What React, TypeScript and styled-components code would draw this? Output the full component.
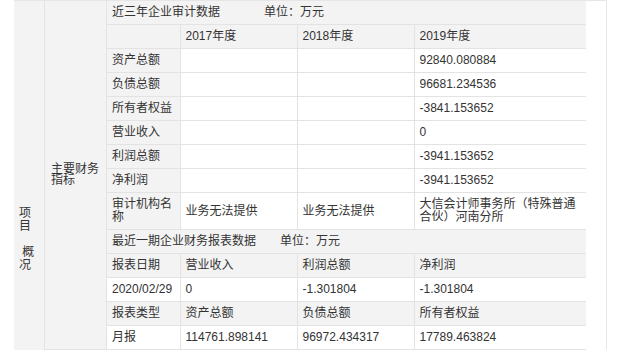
import React from "react";
import styled, { createGlobalStyle } from "styled-components";

const GlobalStyle = createGlobalStyle`
  body {
    margin: 0;
    background: #fff;
    font-family: "Liberation Sans", Arial, "Noto Sans CJK SC", sans-serif;
    font-size: 12px;
    color: #333;
  }
`;

const Page = styled.div`
  padding-left: 14px;
`;

const Outer = styled.div`
  display: flex;
  align-items: flex-start;
  width: 593px;
  box-sizing: border-box;
  border-top: 1px solid #e6e6e6;
  border-right: 1px solid #e6e6e6;
`;

const SideLabel = styled.div`
  box-sizing: border-box;
  width: 31px;
  min-height: 476px;
  padding: 0 5px;
  display: flex;
  align-items: center;
  background: #f3f3f3;
  border-right: 1px solid #e3e3e3;
  line-height: 13px;
`;

const SideText = styled.div`
  width: 20px;
`;

const Group = styled.div`
  display: flex;
  border-bottom: 1px solid #e3e3e3;
`;

const GroupLabel = styled.div`
  box-sizing: border-box;
  width: 62px;
  padding: 0 6px;
  display: flex;
  align-items: center;
  background: #f3f3f3;
  border-right: 1px solid #e3e3e3;
  line-height: 11px;
`;

const Sheet = styled.table`
  width: 479px;
  table-layout: fixed;
  border-collapse: collapse;
`;

const Row = styled.tr<{ $head?: boolean }>`
  background: ${(p) => (p.$head ? "#f3f3f3" : "#fff")};
  &:last-child td {
    border-bottom: none;
  }
`;

const Cell = styled.td<{ $label?: boolean }>`
  padding: 5px 5px;
  line-height: 13px;
  vertical-align: middle;
  border-bottom: 1px solid #e3e3e3;
  border-right: 1px solid #e3e3e3;
  background: ${(p) => (p.$label ? "#f3f3f3" : "transparent")};
  white-space: normal;
  word-break: break-all;
  &:last-child {
    border-right: none;
  }
`;

const Unit = styled.span<{ $gap: number }>`
  margin-left: ${(p) => p.$gap}px;
`;

const audit: [string, string, string, string][] = [
  ["资产总额", "", "", "92840.080884"],
  ["负债总额", "", "", "96681.234536"],
  ["所有者权益", "", "", "-3841.153652"],
  ["营业收入", "", "", "0"],
  ["利润总额", "", "", "-3941.153652"],
  ["净利润", "", "", "-3941.153652"],
  ["审计机构名称", "业务无法提供", "业务无法提供", "大信会计师事务所（特殊普通合伙）河南分所"],
];

const latest: { head: boolean; cells: string[] }[] = [
  { head: true, cells: ["报表日期", "营业收入", "利润总额", "净利润"] },
  { head: false, cells: ["2020/02/29", "0", "-1.301804", "-1.301804"] },
  { head: true, cells: ["报表类型", "资产总额", "负债总额", "所有者权益"] },
  { head: false, cells: ["月报", "114761.898141", "96972.434317", "17789.463824"] },
];

export default function App() {
  return (
    <>
      <GlobalStyle />
      <Page>
        <Outer>
          <SideLabel>
            <SideText>
              项目
              <br />
              <br />
              {"\u00a0概况"}
            </SideText>
          </SideLabel>
          <Group>
            <GroupLabel>主要财务指标</GroupLabel>
            <Sheet>
              <colgroup>
                <col style={{ width: 73 }} />
                <col style={{ width: 117 }} />
                <col style={{ width: 117 }} />
                <col />
              </colgroup>
              <tbody>
                <Row $head>
                  <Cell colSpan={4}>
                    近三年企业审计数据<Unit $gap={44}>单位：万元</Unit>
                  </Cell>
                </Row>
                <Row $head>
                  <Cell />
                  <Cell>2017年度</Cell>
                  <Cell>2018年度</Cell>
                  <Cell>2019年度</Cell>
                </Row>
                {audit.map((r) => (
                  <Row key={r[0]}>
                    <Cell $label>{r[0]}</Cell>
                    <Cell>{r[1]}</Cell>
                    <Cell>{r[2]}</Cell>
                    <Cell>{r[3]}</Cell>
                  </Row>
                ))}
                <Row $head>
                  <Cell colSpan={4}>
                    最近一期企业财务报表数据<Unit $gap={24}>单位：万元</Unit>
                  </Cell>
                </Row>
                {latest.map((r, i) => (
                  <Row key={i} $head={r.head}>
                    {r.cells.map((c, j) => (
                      <Cell key={j}>{c}</Cell>
                    ))}
                  </Row>
                ))}
              </tbody>
            </Sheet>
          </Group>
        </Outer>
      </Page>
    </>
  );
}
